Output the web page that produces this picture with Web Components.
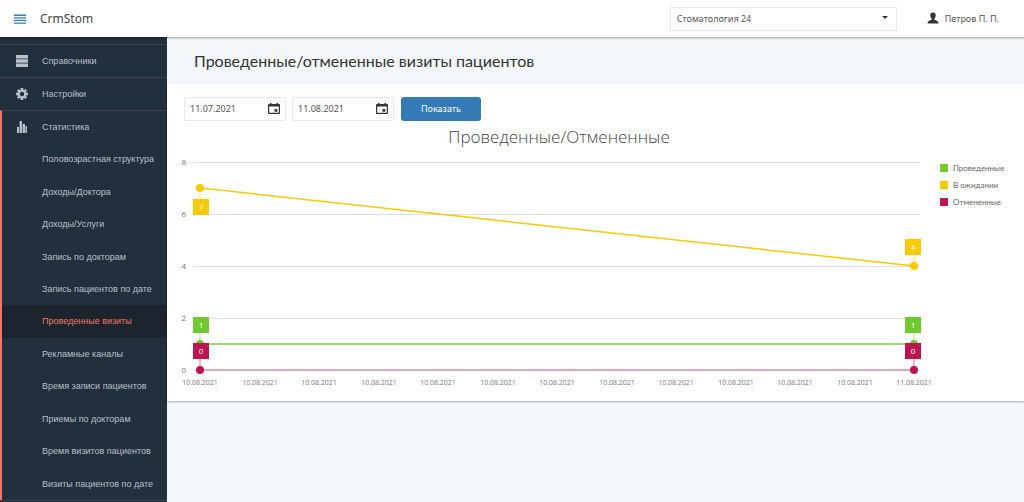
<!DOCTYPE html>
<html lang="ru">
<head>
<meta charset="utf-8">
<meta name="viewport" content="width=device-width, initial-scale=1">
<title>CrmStom</title>
<style>
  html, body { margin: 0; }
  body { background: #f3f6fa; color: #444; font: 9px/16px "Noto Sans", sans-serif; }
</style>
</head>
<body>
<crm-app></crm-app>

<template id="t-app">
  <style>
    :host { display: grid; grid-template: auto 1fr / 167px minmax(0, 1fr); min-height: 100vh; }
    crm-header { grid-column: 1 / -1; }
  </style>
  <crm-header brand="CrmStom">
    <crm-select slot="clinic" label="Клиника" value="Стоматология 24"></crm-select>
    <crm-user slot="user">Петров П. П.</crm-user>
  </crm-header>
  <crm-sidebar>
    <crm-nav-group label="Справочники"><svg slot="icon" viewBox="0 0 12 12" width="12" height="12"><path fill="currentColor" d="M0 0h12v3.500H0zM0 4.200h12v3.500H0zM0 8.500h12V12H0z"/></svg></crm-nav-group>
    <crm-nav-group label="Настройки"><svg slot="icon" viewBox="0 0 12 12" width="12" height="12"><circle cx="6" cy="6" r="3.400" fill="none" stroke="currentColor" stroke-width="2.400"/><path stroke="currentColor" stroke-width="2.600" d="M6 0v2M6 10v2M0 6h2M10 6h2M1.800 1.800l1.300 1.300M8.900 8.900l1.300 1.300M10.200 1.800L8.900 3.100M3.100 8.900l-1.300 1.300"/></svg></crm-nav-group>
    <crm-nav-group label="Статистика" open><svg slot="icon" viewBox="0 0 12 12" width="12" height="12"><path fill="currentColor" d="M1 6h2v6H1zM3.600 0h2.400v12H3.600zM6.600 3H9v9H6.600zM9.500 5h1.500v7H9.500z"/></svg>
      <crm-nav-link>Половозрастная структура</crm-nav-link>
      <crm-nav-link>Доходы/Доктора</crm-nav-link>
      <crm-nav-link>Доходы/Услуги</crm-nav-link>
      <crm-nav-link>Запись по докторам</crm-nav-link>
      <crm-nav-link>Запись пациентов по дате</crm-nav-link>
      <crm-nav-link active>Проведенные визиты</crm-nav-link>
      <crm-nav-link>Рекламные каналы</crm-nav-link>
      <crm-nav-link>Время записи пациентов</crm-nav-link>
      <crm-nav-link>Приемы по докторам</crm-nav-link>
      <crm-nav-link>Время визитов пациентов</crm-nav-link>
      <crm-nav-link>Визиты пациентов по дате</crm-nav-link>
    </crm-nav-group>
  </crm-sidebar>
  <crm-page heading="Проведенные/отмененные визиты пациентов">
    <crm-filters></crm-filters>
    <crm-chart heading="Проведенные/Отмененные"></crm-chart>
  </crm-page>
</template>

<template id="t-header">
  <style>
    :host { display: block; position: relative; z-index: 1; }
    header { display: flex; align-items: center; height: 37px; padding: 0 25px 0 14px; background: #fff; box-shadow: 0 1px 2px rgba(0,0,0,.35); }
    button { display: flex; padding: 0; border: 0; background: none; color: #337ab7; cursor: pointer; }
    .brand { margin-left: 14px; font-size: 12px; color: #444; text-decoration: none; }
    ::slotted([slot=clinic]) { margin-left: auto; }
    ::slotted([slot=user]) { margin-left: 30px; }
  </style>
  <header>
    <button type="button" aria-label="Меню"><svg viewBox="0 0 12 10" width="12" height="10"><path fill="currentColor" d="M0 .6h12v1.300H0zM0 3.200h12v1.300H0zM0 5.800h12v1.300H0zM0 8.400h12v1.300H0z"/></svg></button>
    <a class="brand" href="#"></a>
    <slot name="clinic"></slot>
    <slot name="user"></slot>
  </header>
</template>

<template id="t-select">
  <style>
    :host { display: block; width: 227px; position: relative; }
    select { appearance: none; display: block; box-sizing: border-box; width: 100%; height: 24px; margin: 0; padding: 0 24px 0 6px; border: 1px solid #e6e8ea; border-radius: 1px; background: #fff; color: #555; font: inherit; }
    svg { position: absolute; right: 9px; top: 9px; pointer-events: none; }
  </style>
  <select><option></option></select>
  <svg viewBox="0 0 6 4" width="6" height="4"><path fill="#333" d="M0 0h6L3 3z"/></svg>
</template>

<template id="t-user">
  <style>
    :host { display: block; }
    a { display: flex; align-items: center; gap: 6px; color: #555; text-decoration: none; }
    svg { margin-bottom: 2px; }
  </style>
  <a href="#"><svg viewBox="0 0 12 12" width="12" height="12"><path fill="#333" d="M6 .5c2 0 2.800 1.300 2.700 3C8.600 5 8 6.200 7.300 6.700v1C9.500 8.200 11.500 9 11.500 11.500h-11C.5 9 2.500 8.200 4.700 7.700v-1C4 6.200 3.400 5 3.300 3.500 3.200 1.800 4 .5 6 .5z"/></svg><span><slot></slot></span></a>
</template>

<template id="t-sidebar">
  <style>
    :host { display: block; padding-top: 7px; background: #222f3d; font-family: "Liberation Sans", sans-serif; color: #b8c0c8; }
    nav { border-bottom: 1px solid #3f4350; }
  </style>
  <nav aria-label="Разделы"><slot></slot></nav>
</template>

<template id="t-nav-group">
  <style>
    :host { display: block; border-top: 1px solid #3f4350; }
    :host([open]) { border-left: 2px solid #f0756a; }
    button { display: grid; grid-template-columns: 14px 1fr; gap: 13px; align-items: center; justify-items: start; width: 100%; height: 32px; padding: 0 0 0 15px; border: 0; background: none; color: inherit; font: inherit; cursor: pointer; }
    :host([open]) button { padding-left: 13px; }
    ::slotted(svg) { justify-self: center; }
    .sub { display: none; }
    :host([open]) .sub { display: grid; grid-auto-rows: 1fr; height: 357px; }
  </style>
  <button type="button"><slot name="icon"></slot><span></span></button>
  <div class="sub"><slot></slot></div>
</template>

<template id="t-nav-link">
  <style>
    :host { display: grid; }
    a { display: flex; align-items: center; padding-left: 40px; color: inherit; text-decoration: none; }
    :host([active]) a { background: #1c252e; color: #f0756a; }
  </style>
  <a href="#"><slot></slot></a>
</template>

<template id="t-page">
  <style>
    :host { display: block; }
    h1 { margin: 0; padding: 14px 27px 13px; color: #333; font: 400 16px/20px Lato, sans-serif; }
    section { padding: 13px 17px 8px; background: #fff; box-shadow: 0 1px 2px rgba(0,0,0,.3); }
  </style>
  <main><h1></h1><section><slot></slot></section></main>
</template>

<template id="t-filters">
  <style>
    :host { display: block; }
    form { display: flex; gap: 6px; }
    .submit { width: 80px; height: 24px; margin-left: 1px; padding: 0; border: 0; border-radius: 3px; background: #337ab7; color: #fff; font: inherit; cursor: pointer; }
  </style>
  <form>
    <crm-date label="Дата с" value="11.07.2021"></crm-date>
    <crm-date label="Дата по" value="11.08.2021"></crm-date>
    <button class="submit" type="button">Показать</button>
  </form>
</template>

<template id="t-date">
  <style>
    :host { display: flex; align-items: center; box-sizing: border-box; width: 102px; height: 24px; padding: 0 5px; border: 1px solid #e6e8ea; border-radius: 2px; }
    input { flex: 1; min-width: 0; padding: 0; border: 0; outline: 0; background: none; color: #555; font: inherit; }
    button { display: flex; padding: 0; border: 0; background: none; cursor: pointer; }
  </style>
  <input type="text">
  <button type="button" aria-label="Открыть календарь"><svg viewBox="0 0 12 12" width="12" height="12"><path fill="#333" fill-rule="evenodd" d="M2 0h1.500v1h5V0H10v1h1q1 0 1 1v8q0 1-1 1H1q-1 0-1-1V2q0-1 1-1h1zM1.200 3.500v6.300h9.600V3.500zM6.500 6h2.800v2.800H6.500z"/></svg></button>
</template>

<template id="t-chart">
  <style>
    :host { display: grid; grid-template-columns: minmax(0, 1fr) 67px; margin: 4px 0 0 -6px; color: #666; font-family: Lato, sans-serif; }
    h2 { margin: 0; color: #444; text-align: center; font: 300 17px/24px "Open Sans", sans-serif; }
    svg { display: block; width: 100%; height: 244px; }
    .tick { fill: #777; font: 8px "Open Sans", sans-serif; text-anchor: end; }
    .date { fill: #777; font: 7px "Open Sans", sans-serif; text-anchor: middle; }
    .value { fill: #fff; font: 8px "Open Sans", sans-serif; text-anchor: middle; }
    ul { margin: 0; padding: 35px 0 0; list-style: none; font-size: 8px; }
    li { display: flex; align-items: center; gap: 5px; height: 16px; margin-bottom: 1px; white-space: nowrap; }
    i { width: 8px; height: 8px; background: var(--c); }
  </style>
  <div><h2></h2><svg role="img"></svg></div>
  <ul></ul>
</template>

<script>
  const define = (name, setup) => customElements.define('crm-' + name, class extends HTMLElement {
    constructor() {
      super();
      this.attachShadow({ mode: 'open' }).append(document.getElementById('t-' + name).content.cloneNode(true));
    }
    connectedCallback() {
      if (this.ready) return;
      this.ready = true;
      if (setup) setup(this, s => this.shadowRoot.querySelector(s));
    }
  });

  define('select', (el, $) => {
    $('option').textContent = el.getAttribute('value');
    $('select').setAttribute('aria-label', el.getAttribute('label'));
  });
  define('user');
  define('header', (el, $) => { $('.brand').textContent = el.getAttribute('brand'); });
  define('nav-link');
  define('nav-group', (el, $) => {
    $('span').textContent = el.getAttribute('label');
    $('button').onclick = () => el.toggleAttribute('open');
  });
  define('sidebar');
  define('date', (el, $) => {
    $('input').value = el.getAttribute('value');
    $('input').setAttribute('aria-label', el.getAttribute('label'));
  });
  define('filters');

  const series = [
    { name: 'Проведенные', color: '#70c92f', line: '#9bdc6c', width: 2, from: 1, to: 1 },
    { name: 'В ожидании', color: '#f9ca00', line: '#f9ca00', width: 1.5, from: 7, to: 4, below: true },
    { name: 'Отмененные', color: '#bd1550', line: '#cf5c85', width: 1, from: 0, to: 0 }
  ];
  const dates = [...Array(12).fill('10.08.2021'), '11.08.2021'];

  define('chart', (el, $) => {
    $('h2').textContent = el.getAttribute('heading');
    $('svg').setAttribute('aria-label', el.getAttribute('heading'));
    $('ul').innerHTML = series.map(s => `<li><i style="--c:${s.color}"></i>${s.name}</li>`).join('');
    const draw = () => {
      const svg = $('svg'), w = svg.clientWidth;
      const left = 15, right = w - 20, x0 = 22, x1 = w - 26;
      const y = v => 221 - v * 26;
      let out = '';
      for (let v = 0; v <= 8; v += 2)
        out += `<path d="M${left} ${y(v)}H${right}" stroke="#dfdfdf" shape-rendering="crispEdges"/><text class="tick" x="8" y="${y(v) + 3}">${v}</text>`;
      dates.forEach((d, i) => {
        out += `<text class="date" x="${Math.round(x0 + (x1 - x0) * i / (dates.length - 1))}" y="236">${d}</text>`;
      });
      for (const s of series)
        out += `<path d="M${x0} ${y(s.from)}L${x1} ${y(s.to)}" stroke="${s.line}" stroke-width="${s.width}"/>`
          + `<circle cx="${x0}" cy="${y(s.from)}" r="4" fill="${s.color}"/><circle cx="${x1}" cy="${y(s.to)}" r="4" fill="${s.color}"/>`;
      for (const s of series)
        for (const [x, v, d, c] of [[x0, s.from, s.below ? 19 : -19, x0 + 1], [x1, s.to, -19, x1 - 1]])
          out += `<path d="M${x} ${y(v)}v${d}" stroke="${s.color}" opacity=".6"/>`
            + `<rect x="${c - 8}" y="${y(v) + d - 8}" width="16" height="16" fill="${s.color}"/>`
            + `<text class="value" x="${c}" y="${y(v) + d + 3}">${v}</text>`;
      svg.innerHTML = out;
    };
    draw();
    new ResizeObserver(draw).observe(el);
  });
  define('page', (el, $) => { $('h1').textContent = el.getAttribute('heading'); });
  define('app');
</script>
</body>
</html>
